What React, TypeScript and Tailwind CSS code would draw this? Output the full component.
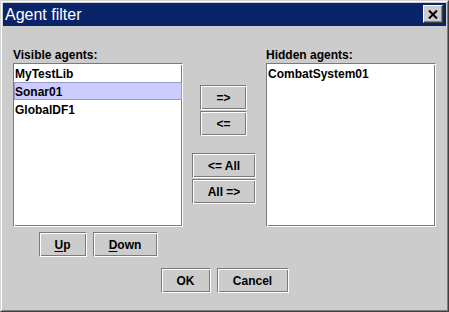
import React from 'react';

const font = { fontFamily: '"Liberation Sans", Arial, sans-serif' };

const etched =
    'border border-t-[#7a7a7a] border-l-[#7a7a7a] border-b-white border-r-white shadow-[inset_1px_1px_0_#ffffff,inset_-1px_-1px_0_#7a7a7a]';

const Btn: React.FC<{ w: string; children: React.ReactNode }> = ({ w, children }) => (
    <button
        className={`${w} h-[25px] ${etched} bg-[#cccccc] flex items-center justify-center text-[12px] font-bold text-black leading-none`}
        style={font}
    >
        {children}
    </button>
);

const AgentList: React.FC<{ items: string[]; selected?: number }> = ({ items, selected }) => (
    <div className={`w-[170px] h-[164px] bg-white ${etched} flex flex-col`}>
        {items.map((item, i) => (
            <div
                key={item}
                className={`h-[18px] pt-[2px] pl-px leading-[16px] text-[12px] font-bold text-black ${
                    i === selected ? 'bg-[#ccccff] shadow-[inset_0_0_0_1px_#9999cc]' : ''
                }`}
            >
                {item}
            </div>
        ))}
    </div>
);

export default function App() {
    return (
        <div
            className="w-[449px] h-[312px] bg-[#cccccc] border border-t-[#d4d4d4] border-l-[#d4d4d4] border-b-[#404040] border-r-[#404040]"
            style={font}
        >
            <div className="h-full border border-t-white border-l-white border-b-[#808080] border-r-[#808080] p-px flex flex-col">
                {/* Title bar */}
                <div className="h-[23px] bg-[#0a246a] flex items-start justify-between pl-[2px] pr-[3px]">
                    <span className="text-white text-[16px] leading-[23px]">Agent filter</span>
                    <div className="mt-[2px] w-[20px] h-[18px] bg-[#cccccc] border border-t-white border-l-white border-b-[#404040] border-r-[#404040] shadow-[inset_-1px_-1px_0_#808080] flex items-center justify-center">
                        <svg width="10" height="9" viewBox="0 0 10 9">
                            <path d="M1 0.5 L9 8.5 M9 0.5 L1 8.5" stroke="#000" strokeWidth="2" />
                        </svg>
                    </div>
                </div>

                {/* Body */}
                <div className="flex-1 flex flex-col px-[10px] pt-[22px] text-[12px] font-bold text-black">
                    <div className="flex">
                        <div className="w-[170px] flex flex-col">
                            <div className="h-[15px] leading-[15px]">Visible agents:</div>
                            <AgentList items={['MyTestLib', 'Sonar01', 'GlobalDF1']} selected={1} />
                            <div className="mt-[5px] flex justify-center gap-[6px]">
                                <Btn w="w-[48px]">
                                    <span className="underline underline-offset-2">U</span>p
                                </Btn>
                                <Btn w="w-[65px]">
                                    <span className="underline underline-offset-2">D</span>own
                                </Btn>
                            </div>
                        </div>

                        <div className="w-[83px] flex flex-col pt-[37px]">
                            <div className="ml-[17px] flex flex-col gap-px">
                                <Btn w="w-[47px]">=&gt;</Btn>
                                <Btn w="w-[47px]">&lt;=</Btn>
                            </div>
                            <div className="ml-[9px] mt-[17px] flex flex-col gap-px">
                                <Btn w="w-[64px]">&lt;= All</Btn>
                                <Btn w="w-[64px]">All =&gt;</Btn>
                            </div>
                        </div>

                        <div className="w-[170px] flex flex-col">
                            <div className="h-[15px] leading-[15px]">Hidden agents:</div>
                            <AgentList items={['CombatSystem01']} />
                        </div>
                    </div>

                    <div className="mt-[11px] flex justify-center gap-[6px]">
                        <Btn w="w-[50px]">OK</Btn>
                        <Btn w="w-[72px]">Cancel</Btn>
                    </div>
                </div>
            </div>
        </div>
    );
}
